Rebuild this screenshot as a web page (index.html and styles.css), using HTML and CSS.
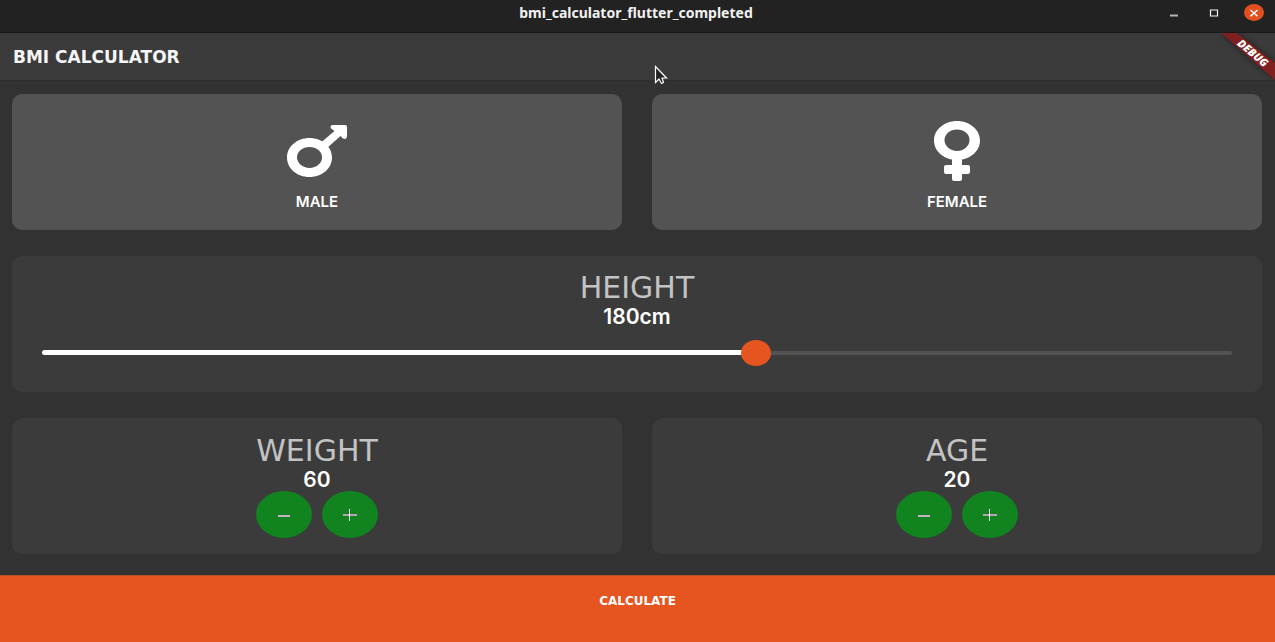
FILE: index.html
```html
<!DOCTYPE html>
<html lang="en">
<head>
<meta charset="utf-8">
<meta name="viewport" content="width=device-width, initial-scale=1">
<title>bmi_calculator_flutter_completed</title>
<link rel="stylesheet" href="styles.css">
</head>
<body>
<div class="window">
  <div class="titlebar">
    <span class="titlebar-name">bmi_calculator_flutter_completed</span>
    <div class="window-buttons">
      <button class="window-button" aria-label="Minimize"><svg width="10" height="10"><path d="M1 7.5h8" stroke="#b5b5b5" stroke-width="2"/></svg></button>
      <button class="window-button" aria-label="Maximize"><svg width="10" height="10"><path d="M1.5 2h7v6h-7z" fill="none" stroke="#f2f2f2" stroke-width="1.200"/></svg></button>
      <button class="window-button window-close" aria-label="Close"><svg width="10" height="10"><path d="M1.5 2l7 6.200M8.500 2l-7 6.200" stroke="#fff" stroke-width="1.500"/></svg></button>
    </div>
  </div>
  <header class="appbar">
    <h1 class="appbar-title">BMI CALCULATOR</h1>
    <svg class="debug-ribbon" width="75" height="60" viewBox="0 0 75 60">
      <defs><filter id="soft" x="-30%" y="-30%" width="160%" height="160%"><feGaussianBlur stdDeviation="3"/></filter></defs>
      <path d="M21 0H37L75 30V47Z" fill="#000" opacity=".5" filter="url(#soft)"/>
      <path d="M21 0H37L75 30V47Z" fill="#7f2020"/>
      <text class="debug-text" transform="translate(53 20) rotate(40)" text-anchor="middle" y="4">DEBUG</text>
    </svg>
  </header>
  <main class="cards">
    <button class="card card-active">
      <svg class="gender-icon" width="62" height="62" viewBox="0 0 62 62">
        <path fill="#fff" fill-rule="evenodd" d="M23.500 18C36 18 46 26.500 46 37.500S36 57 23.500 57 1 48.500 1 37.500 11 18 23.500 18ZM23.500 27C16.500 27 11 31.500 11 37.300S16.500 48 23.500 48 36 43.300 36 37.300 30.500 27 23.500 27Z"/>
        <path fill="#fff" d="M35 22.500L48.500 11 45 8.500Q43.500 5 47 5H59Q61 5 61 7V16.500Q60.500 20 57 18.500L54.500 16 41 28Z"/>
      </svg>
      <span class="gender-label">MALE</span>
    </button>
    <button class="card card-active">
      <svg class="gender-icon" width="62" height="62" viewBox="0 0 62 62">
        <path fill="#fff" fill-rule="evenodd" d="M31 1C43.500 1 54 9.500 54 20.500S43.500 40 31 40 8 31.500 8 20.500 18.500 1 31 1ZM31 9.500C24 9.500 18.500 14.200 18.500 20S24 31 31 31 43.500 26 43.500 20 38 9.500 31 9.500Z"/>
        <path fill="#fff" d="M26 37H36V45H42Q44 45 44 47V52Q44 54 42 54H36V59Q36 61 34 61H28Q26 61 26 59V54H20Q18 54 18 52V47Q18 45 20 45H26Z"/>
      </svg>
      <span class="gender-label">FEMALE</span>
    </button>
    <section class="card card-wide">
      <label class="card-title" for="height">HEIGHT</label>
      <output class="card-value" for="height">180cm</output>
      <div class="slider">
        <div class="slider-track"></div>
        <div class="slider-fill" style="width:60%"></div>
        <input class="slider-input" id="height" type="range" min="0" max="300" value="180">
      </div>
    </section>
    <section class="card card-counter">
      <h2 class="card-title">WEIGHT</h2>
      <output class="card-value">60</output>
      <div class="stepper">
        <button class="step" aria-label="Decrease weight"><svg width="14" height="14"><path d="M1 8h12" stroke="#c2b3c2" stroke-width="2"/></svg></button>
        <button class="step" aria-label="Increase weight"><svg width="14" height="14"><path d="M0 7h14" stroke="#b3a3b3" stroke-width="2"/><path d="M6.500 1v12" stroke="#fff"/></svg></button>
      </div>
    </section>
    <section class="card card-counter">
      <h2 class="card-title">AGE</h2>
      <output class="card-value">20</output>
      <div class="stepper">
        <button class="step" aria-label="Decrease age"><svg width="14" height="14"><path d="M1 8h12" stroke="#c2b3c2" stroke-width="2"/></svg></button>
        <button class="step" aria-label="Increase age"><svg width="14" height="14"><path d="M0 7h14" stroke="#b3a3b3" stroke-width="2"/><path d="M6.500 1v12" stroke="#fff"/></svg></button>
      </div>
    </section>
  </main>
  <button class="calculate">CALCULATE</button>
  <svg class="pointer" width="14" height="20" viewBox="0 0 14 20"><path d="M1.500 1.500V17.500L5 14 7.500 18.500 9.500 17.500 8 13H12.500Z" fill="#222" stroke="#fff" stroke-width="1.200"/></svg>
</div>
</body>
</html>
```
FILE: styles.css
```css
* { box-sizing: border-box; }

body {
  margin: 0;
  background: #323232;
  color: #fff;
  font-family: Inter, "Noto Sans", sans-serif;
}

button {
  border: 0;
  padding: 0;
  color: inherit;
  font-family: inherit;
}

.window {
  position: relative;
  display: flex;
  flex-direction: column;
  min-height: 100vh;
}

.titlebar {
  display: grid;
  grid-template-columns: 1fr auto 1fr;
  height: 33px;
  padding: 0 11px 7px 8px;
  align-items: center;
  background: #222;
  border-bottom: 1px solid #191919;
}

.titlebar-name {
  grid-column: 2;
  font-family: "Noto Sans", sans-serif;
  font-size: 14px;
  line-height: 20px;
  font-weight: 700;
  color: #f2f2f2;
}

.window-buttons {
  display: flex;
  justify-content: flex-end;
  gap: 20px;
}

.window-button {
  display: flex;
  width: 20px;
  height: 17px;
  align-items: center;
  justify-content: center;
  background: none;
}

.window-close {
  border-radius: 50%;
  background: #e2501f;
}

.appbar {
  position: relative;
  display: flex;
  height: 48px;
  padding: 0 13px;
  align-items: center;
  overflow: hidden;
  background: #3b3b3b;
  border-bottom: 1px solid #2e2e2e;
}

.appbar-title {
  margin: 0;
  font-family: "DejaVu Sans", sans-serif;
  font-size: 17px;
  line-height: 24px;
  font-weight: 700;
  color: #f5f5f5;
}

.debug-ribbon {
  position: absolute;
  top: 0;
  right: 0;
}

.debug-text {
  font-family: "Noto Sans", sans-serif;
  font-size: 11px;
  font-style: italic;
  font-weight: 900;
  fill: #fff;
}

.cards {
  display: grid;
  flex: 1;
  grid-template-columns: 1fr 1fr;
  grid-template-rows: repeat(3, 1fr);
  gap: 26px 30px;
  padding: 13px 13px 21px 12px;
}

.card {
  display: flex;
  flex-direction: column;
  align-items: center;
  padding-top: 15px;
  border-radius: 10px;
  background: #3b3b3b;
}

.card-active {
  justify-content: center;
  gap: 8px;
  padding: 8px 0 0;
  background: #535353;
}

.card-wide { grid-column: 1 / -1; }

.card-counter { padding-top: 16px; }

.gender-label {
  font-size: 15px;
  line-height: 23px;
  font-weight: 600;
}

.card-title {
  margin: 0;
  font-family: "DejaVu Sans", sans-serif;
  font-size: 30px;
  line-height: 34px;
  font-weight: 400;
  color: #c3c3c3;
}

.card-value {
  font-size: 21px;
  line-height: 23px;
  font-weight: 600;
}

.slider {
  position: relative;
  align-self: stretch;
  height: 26px;
  margin: 12px 30px 0;
}

.slider-track,
.slider-fill {
  position: absolute;
  left: 0;
  border-radius: 3px;
}

.slider-track {
  top: 11px;
  width: 100%;
  height: 4px;
  background: #535353;
}

.slider-fill {
  top: 10px;
  height: 5px;
  background: #fff;
}

.slider-input {
  position: absolute;
  left: -15px;
  width: calc(100% + 30px);
  height: 26px;
  margin: 0;
  appearance: none;
  background: none;
}

.slider-input::-webkit-slider-thumb {
  appearance: none;
  width: 30px;
  height: 26px;
  border-radius: 50%;
  background: #e6551f;
}

.stepper {
  display: flex;
  gap: 10px;
}

.step {
  display: flex;
  width: 56px;
  height: 47px;
  align-items: center;
  justify-content: center;
  border-radius: 50%;
  background: #118420;
}

.calculate {
  height: 67px;
  padding-bottom: 16px;
  border-top: 1px solid #b94a24;
  background: #e6551f;
  font-family: "DejaVu Sans", sans-serif;
  font-size: 12px;
  line-height: 16px;
  font-weight: 700;
}

.pointer {
  position: absolute;
  top: 65px;
  left: 654px;
}
```
